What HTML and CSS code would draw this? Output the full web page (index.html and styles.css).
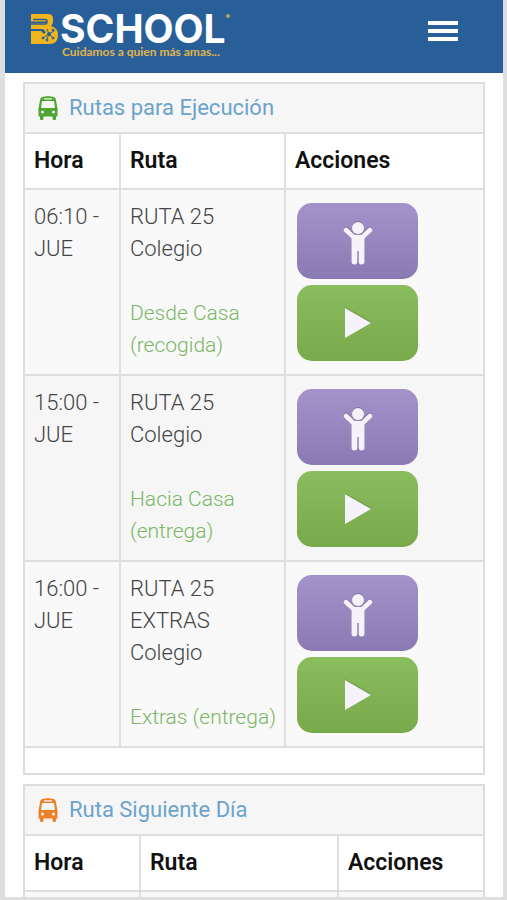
FILE: index.html
```html
<!DOCTYPE html>
<html lang="es">
<head>
<meta charset="utf-8">
<meta name="viewport" content="width=device-width, initial-scale=1">
<title>BSchool</title>
<link rel="stylesheet" href="styles.css">
</head>
<body>
<svg class="symbols" aria-hidden="true">
  <symbol id="bus" viewBox="0 0 20 24">
    <path fill="currentColor" fill-rule="evenodd" d="M4.500 1C7 .1 13 .1 15.500 1C17.300 1.700 17.800 2.600 18 4.500L19.500 12.500V20.500H18V22.500A1.700 1.700 0 0 1 14.600 22.500V20.500H5.400V22.500A1.700 1.700 0 0 1 2 22.500V20.500H.5V12.500L2 4.500C2.200 2.600 2.700 1.700 4.500 1ZM6 2.200V3.600H14V2.200ZM4 5L3 12H17L16 5ZM4.500 14.500A1.500 1.500 0 1 0 4.500 17.500A1.500 1.500 0 1 0 4.500 14.500ZM15.500 14.500A1.500 1.500 0 1 0 15.500 17.500A1.500 1.500 0 1 0 15.500 14.500Z"/>
  </symbol>
  <symbol id="child" viewBox="0 0 30 44">
    <circle cx="15" cy="7" r="6"/>
    <path d="M3 9L10.500 16H19.500L27 9" fill="none" stroke="currentColor" stroke-width="4.500" stroke-linecap="round" stroke-linejoin="round"/>
    <path d="M8.500 15H21.500V40.500A2.800 2.800 0 0 1 15.700 40.500V30H14.300V40.500A2.800 2.800 0 0 1 8.500 40.500Z"/>
  </symbol>
  <symbol id="play" viewBox="0 0 28 32">
    <path d="M1 1L27 16L1 31Z"/>
  </symbol>
</svg>
<header class="topbar">
  <a class="brand" href="#" aria-label="BSchool">
    <svg class="mark" viewBox="0 0 28 30" aria-hidden="true">
      <path fill="#f0b41c" d="M0 0H17Q22 0 22 5V8Q22 10 20 12Q27 14 27 21Q27 30 18 30H0V17H10L13 20L15 18L12 15H0V9H15V7.500H0Z"/>
      <path stroke="#285f98" stroke-width="1.500" fill="none" d="M2 5.500H14Q16 5.500 16 8Q16 10 14 10H0"/>
      <g stroke="#285f98" fill="#285f98" stroke-width="1">
        <path d="M12 24L18 20L23 17M16 15L18 20L22 24M18 20L16 25" fill="none"/>
        <circle cx="12" cy="24" r="1"/><circle cx="18" cy="20" r="1.500"/><circle cx="22" cy="16" r="1"/><circle cx="22" cy="24" r="1"/><circle cx="16" cy="26" r="1"/>
      </g>
    </svg>
    <span class="words">
      <span class="name">SCHOOL</span>
      <span class="tagline">Cuidamos a quien más amas...</span>
    </span>
    <span class="dot"></span>
  </a>
  <button class="menu" type="button" aria-label="Menú"><span></span><span></span><span></span></button>
</header>
<main class="content">
  <section class="panel">
    <h2 class="panel-title"><svg class="bus today" aria-hidden="true"><use href="#bus"/></svg>Rutas para Ejecución</h2>
    <table class="routes">
      <colgroup><col class="c-hour"><col class="c-route"><col></colgroup>
      <thead><tr><th>Hora</th><th>Ruta</th><th>Acciones</th></tr></thead>
      <tbody>
        <tr>
          <td>06:10 - JUE</td>
          <td>RUTA 25<br>Colegio<p class="kind">Desde Casa (recogida)</p></td>
          <td><div class="actions"><button class="act kids" type="button" aria-label="Estudiantes"><svg><use href="#child"/></svg></button><button class="act start" type="button" aria-label="Iniciar"><svg><use href="#play"/></svg></button></div></td>
        </tr>
        <tr>
          <td>15:00 - JUE</td>
          <td>RUTA 25<br>Colegio<p class="kind">Hacia Casa (entrega)</p></td>
          <td><div class="actions"><button class="act kids" type="button" aria-label="Estudiantes"><svg><use href="#child"/></svg></button><button class="act start" type="button" aria-label="Iniciar"><svg><use href="#play"/></svg></button></div></td>
        </tr>
        <tr>
          <td>16:00 - JUE</td>
          <td>RUTA 25<br>EXTRAS<br>Colegio<p class="kind">Extras (entrega)</p></td>
          <td><div class="actions"><button class="act kids" type="button" aria-label="Estudiantes"><svg><use href="#child"/></svg></button><button class="act start" type="button" aria-label="Iniciar"><svg><use href="#play"/></svg></button></div></td>
        </tr>
      </tbody>
    </table>
  </section>
  <section class="panel">
    <h2 class="panel-title"><svg class="bus next" aria-hidden="true"><use href="#bus"/></svg>Ruta Siguiente Día</h2>
    <table class="routes">
      <colgroup><col class="n-hour"><col class="n-route"><col></colgroup>
      <thead><tr><th>Hora</th><th>Ruta</th><th>Acciones</th></tr></thead>
      <tbody><tr><td></td><td></td><td></td></tr></tbody>
    </table>
  </section>
</main>
</body>
</html>
```
FILE: styles.css
```css
* { box-sizing: border-box; }
body {
  margin: 0;
  height: 100vh;
  overflow: hidden;
  border: solid #dedede;
  border-width: 0 4px 3px 5px;
  background: #fff;
  color: #444;
  font: 300 22px/32px Roboto, "Liberation Sans", sans-serif;
}
.symbols { display: none; }
.topbar {
  display: flex;
  justify-content: space-between;
  align-items: flex-start;
  height: 73px;
  padding: 14px 45px 0 26px;
  background: #285f98;
}
.brand { display: flex; text-decoration: none; }
.mark { width: 28px; height: 30px; }
.words { display: flex; flex-direction: column; margin-left: 1px; }
.name { color: #fff; font: 700 39px/30px Inter, sans-serif; }
.tagline { padding-left: 2px; color: #e2b44c; font: 700 12px/16px Lato, sans-serif; white-space: nowrap; }
.dot { width: 4px; height: 4px; border-radius: 50%; background: #b9a35c; }
.menu {
  display: flex;
  flex-direction: column;
  gap: 4px;
  margin-top: 7px;
  padding: 0;
  border: 0;
  background: none;
}
.menu span { width: 30px; height: 4px; background: #fff; }
.content { display: flex; flex-direction: column; gap: 9px; padding: 9px 18px; }
.panel { flex: none; border: 2px solid #ddd; padding-bottom: 25px; }
.panel-title {
  display: flex;
  align-items: center;
  gap: 11px;
  height: 48px;
  margin: 0;
  padding: 0 13px;
  background: #f6f6f6;
  color: #6ba3cc;
  font-size: 22px;
  font-weight: 400;
}
.bus { width: 20px; height: 24px; }
.today { color: #4fa52e; }
.next { color: #ec8128; }
.routes { width: 100%; table-layout: fixed; border-collapse: collapse; }
.c-hour { width: 95px; }
.c-route { width: 165px; }
.n-hour { width: 115px; }
.n-route { width: 198px; }
.routes th, .routes td { border: 2px solid #dfdfdf; text-align: left; vertical-align: top; }
.routes th:first-child, .routes td:first-child { border-left: 0; }
.routes th:last-child, .routes td:last-child { border-right: 0; }
.routes th { height: 55px; padding: 11px 9px; color: #111; font-size: 23px; font-weight: 600; }
.routes td { height: 186px; padding: 11px 8px 10px 9px; background: #f9f9f9; }
.routes tbody tr:nth-child(2) td { background: #f6f6f6; }
.kind { margin: 32px 0 0; color: #79b665; font-size: 21px; }
.actions { display: flex; flex-direction: column; gap: 6px; padding: 2px 2px 0; }
.act {
  display: flex;
  align-items: center;
  justify-content: center;
  width: 121px;
  height: 76px;
  padding: 0;
  border: 0;
  border-radius: 15px;
  color: #f5f2fa;
}
.kids { background: linear-gradient(#a493cb, #8a7ab3); }
.start { background: linear-gradient(#8abd5e, #78a94a); }
.act svg { fill: currentColor; filter: drop-shadow(0 -1px 0 rgba(0, 0, 0, .2)); }
.kids svg { width: 30px; height: 44px; margin-top: 3px; }
.start svg { width: 28px; height: 32px; }
```
